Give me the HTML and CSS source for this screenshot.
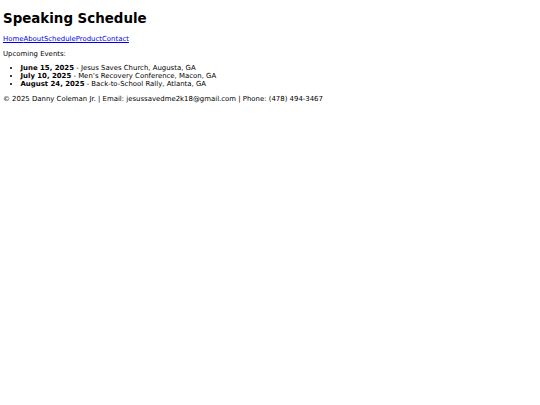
FILE: index.html
```html
<!DOCTYPE html>
<html>
<head>
<meta charset="utf-8">
<title>Speaking Schedule</title>
<link rel="stylesheet" href="styles.css">
</head>
<body>
<h1 class="title">Speaking Schedule</h1>
<nav class="nav"><a href="#">Home</a><a href="#">About</a><a href="#">Schedule</a><a href="#">Product</a><a href="#">Contact</a></nav>
<p class="intro">Upcoming Events:</p>
<ul class="events">
<li><strong>June 15, 2025</strong> - Jesus Saves Church, Augusta, GA</li>
<li><strong>July 10, 2025</strong> - Men’s Recovery Conference, Macon, GA</li>
<li><strong>August 24, 2025</strong> - Back-to-School Rally, Atlanta, GA</li>
</ul>
<footer class="footer">© 2025 Danny Coleman Jr. | Email: jesussavedme2k18@gmail.com | Phone: (478) 494-3467</footer>
</body>
</html>
```
FILE: styles.css
```css
html, body {
  background: #fff;
}
body {
  margin: 3px;
  font-family: "DejaVu Sans", Verdana, sans-serif;
  font-size: 6.93px;
  color: #000;
}
.title {
  font-size: 13.4px;
  margin: 8.2px 0 9px;
}
.nav {
  display: block;
}
.nav a {
  color: #0000ee;
}
.intro {
  margin: 6.5px 0;
}
.events {
  margin: 6.5px 0;
  padding-left: 17.5px;
}
.footer {
  margin-top: 7px;
}
```
